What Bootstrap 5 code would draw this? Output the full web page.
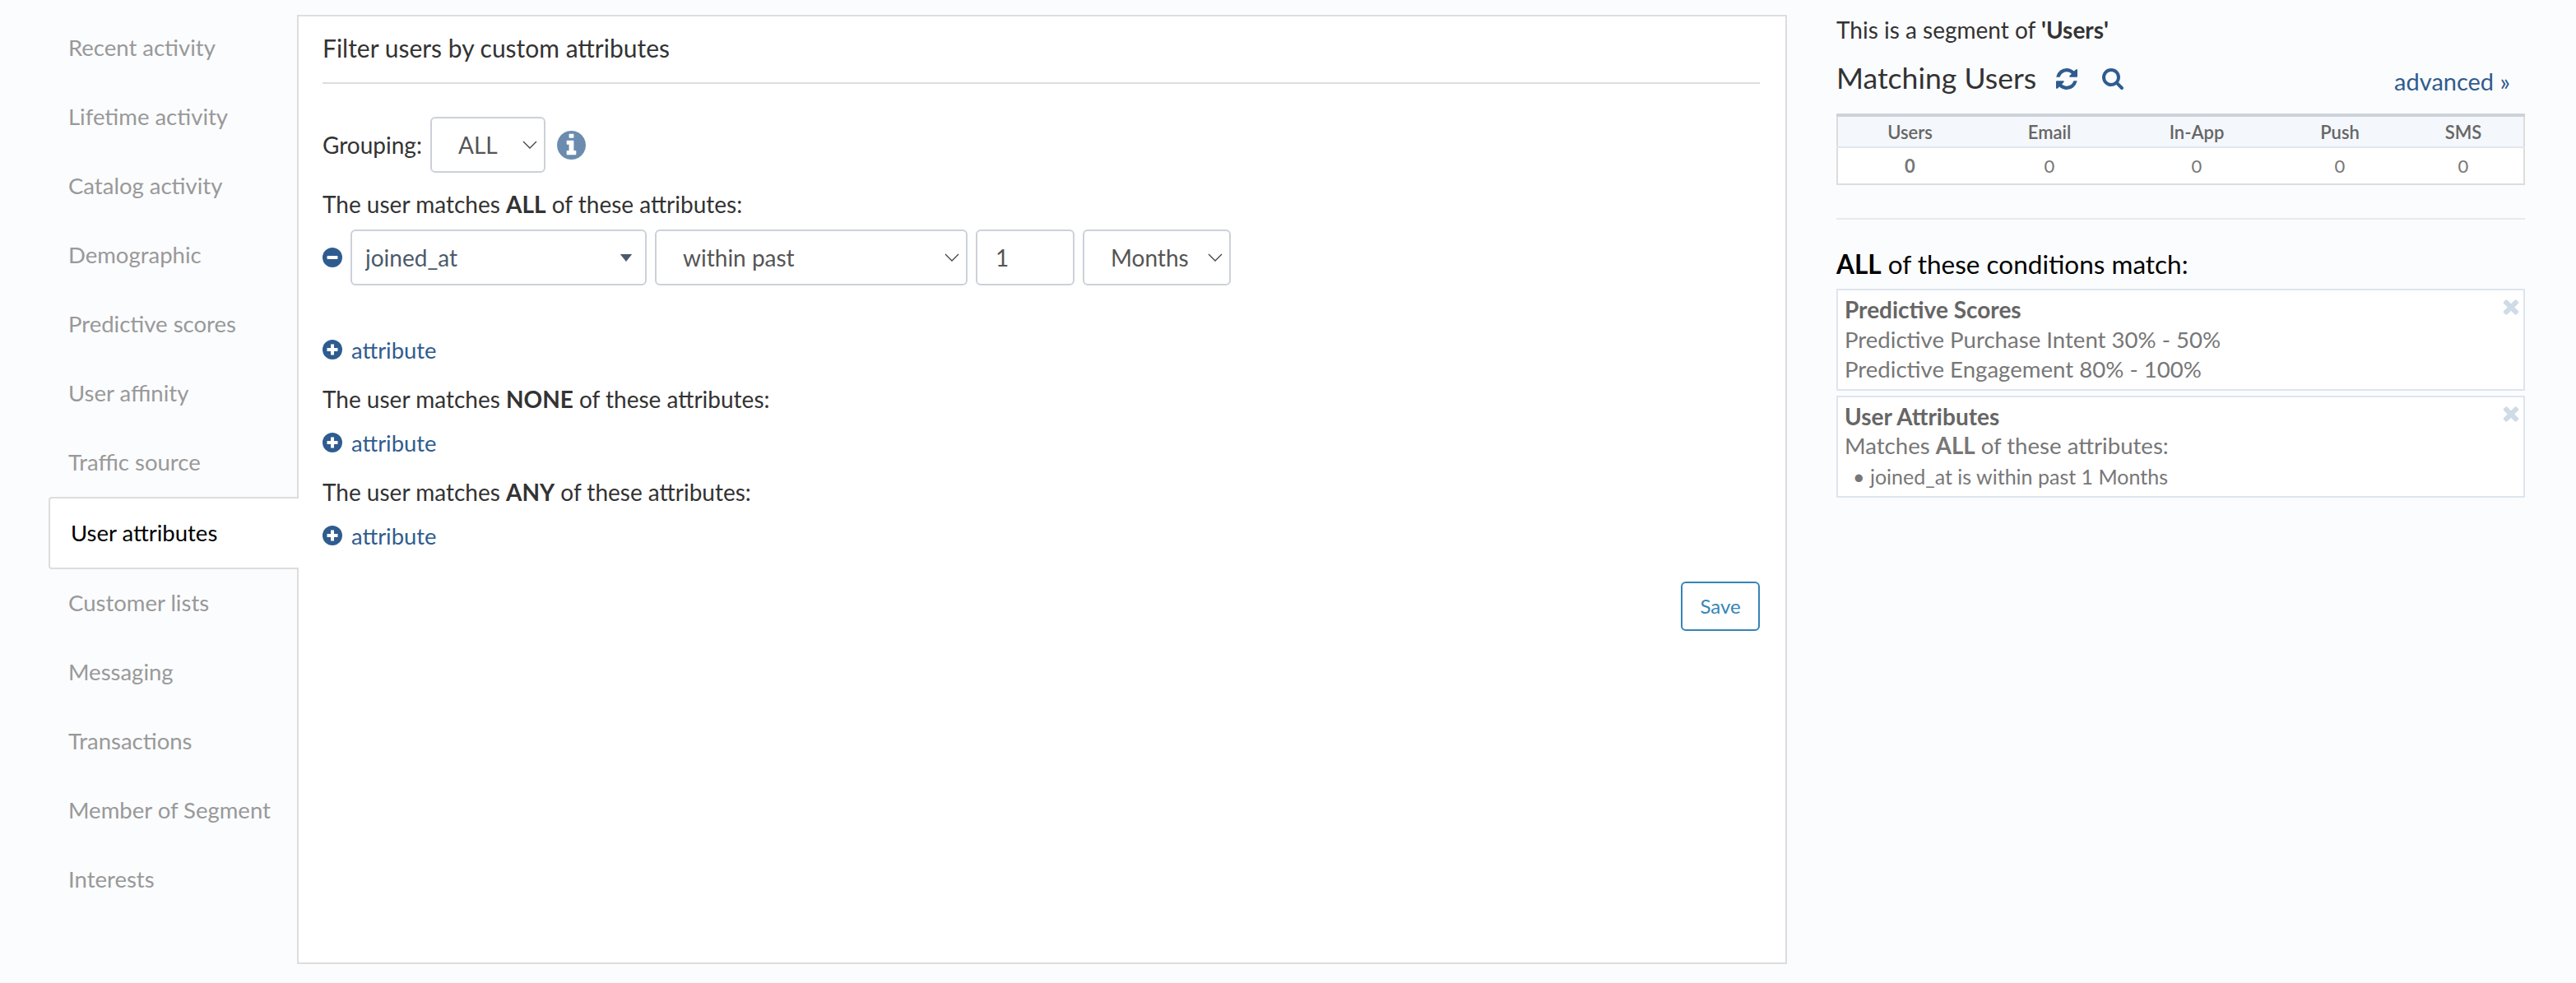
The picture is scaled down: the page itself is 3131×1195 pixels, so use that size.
<!DOCTYPE html>
<html lang="en"><head><meta charset="utf-8"><title>Segment</title>
<link href="https://cdn.jsdelivr.net/npm/bootstrap@5.3.0/dist/css/bootstrap.min.css" rel="stylesheet">
<style>
:root{--ink:#333;--blue:#2f5c8f}
html,body{height:100%}
body{background:#fbfcfe;font-family:Lato,"Liberation Sans",sans-serif;font-size:28px;color:var(--ink);overflow:hidden}
.shell{padding-top:18px;height:1195px}
.side-nav{width:361px;flex:none;margin-top:-2px;font-size:27.5px}
.side-link{display:flex;align-items:center;height:84px;padding-left:83px;color:#999;text-decoration:none}
.side-link.on{height:88px;margin:0 -2px -1px 59px;padding-left:25px;color:#000;background:#fff;border:2px solid #ddd;border-right:0;border-radius:4px 0 0 4px;position:relative;z-index:1}
.main-panel{width:1811px;height:1154px;flex:none;background:#fff;border:2px solid #ddd;border-radius:0;padding:0 31px 0 29px}
.panel-head{height:82px;border-bottom:2px solid #ddd;display:flex;align-items:center;padding-bottom:5px;color:#333;margin:0;font-size:30px;font-weight:400}
.group-row{margin-top:40px;height:68px;gap:10px}
.line-text{line-height:37px}
.pick{height:68px;font-size:28px;padding:0 40px 0 32px;color:#555;border:2px solid #ccd1d9;border-radius:6px;background-color:#fff;background-image:url("data:image/svg+xml,%3Csvg xmlns='http://www.w3.org/2000/svg' viewBox='0 0 18 10'%3E%3Cpath fill='none' stroke='%23444' stroke-width='1.3' d='M1 1l8 8 8-8'/%3E%3C/svg%3E");background-position:right 8px center;background-size:18px 10px;box-shadow:none}
.pick-sm{width:140px;padding-left:32px}
.pick-attr{width:360px;padding-left:16px;color:#4b5a6b;background-image:url("data:image/svg+xml,%3Csvg xmlns='http://www.w3.org/2000/svg' viewBox='0 0 16 10'%3E%3Cpath fill='%234b5a6b' d='M0 0h16L8 10z'/%3E%3C/svg%3E");background-size:16px 9px;background-position:right 15px center}
.pick-op{width:380px}
.pick-num{width:120px;height:68px;font-size:28px;padding:0 22px;color:#555;border:2px solid #ccd1d9;border-radius:6px}
.pick-unit{width:180px;padding-left:32px}
.ic-round{width:24px;height:24px;flex:none;fill:var(--blue)}
.ic-info{width:35px;height:35px;fill:#6b8cae;flex:none;margin-left:4px}
.row-attr{gap:10px}
.add-link{color:var(--blue);text-decoration:none;display:inline-flex;align-items:center;gap:11px;line-height:37px;font-size:27.4px}
.save-btn{width:96px;height:60px;padding:0;font-size:24px;color:#3585b5;border:2px solid #3585b5;border-radius:6px;background:#fff}
.right-col{width:837px;margin-left:60px;flex:none}
.top-note{line-height:37px;padding-top:0;margin:0}
.match-head{height:64px;margin-top:8px;padding-top:1px}
.match-title{font-size:35.6px;font-weight:400;margin:0;color:#333}
.ic-tool{width:26px;height:26px;fill:var(--blue)}
.adv-link{color:var(--blue);text-decoration:none;margin-right:18px;font-size:29px;margin-top:6px}
.stat-table{table-layout:fixed;width:837px;margin:11px 0 0;font-size:22px;border:2px solid #ddd;border-top:4px solid #cdd2da;background:#fff;--bs-table-bg:transparent;text-align:center}
.stat-table th{height:39px;padding:0;background:#f4f7fb;font-weight:600;color:#666;border-bottom:2px solid #e3e6ea;vertical-align:middle}
.stat-table td{height:45px;padding:0;color:#777;border:0;vertical-align:middle}
.rule{margin:40px 0 0;border:0;border-top:2px solid #e8eaee;opacity:1}
.cond-title{font-size:31.5px;color:#000;font-weight:400;margin:36px 0 11px;line-height:37px}
.cond-box{position:relative;background:#fff;border:2px solid #dde5ee;padding:5px 8px 5px;color:#777;margin-bottom:6px;line-height:36.6px;font-size:27.6px;border-radius:0}
.cond-name{font-weight:700;color:#666;font-size:28px}
.cond-sub{padding-left:10px;font-size:25px}
.cond-x{position:absolute;right:5px;top:10px;width:20px;height:20px;fill:#cfdbe6}
</style></head><body>
<div class="shell d-flex">
  <nav class="side-nav d-flex flex-column">
    <a class="side-link" href="#">Recent activity</a>
    <a class="side-link" href="#">Lifetime activity</a>
    <a class="side-link" href="#">Catalog activity</a>
    <a class="side-link" href="#">Demographic</a>
    <a class="side-link" href="#">Predictive scores</a>
    <a class="side-link" href="#">User affinity</a>
    <a class="side-link" href="#">Traffic source</a>
    <a class="side-link on" href="#">User attributes</a>
    <a class="side-link" href="#">Customer lists</a>
    <a class="side-link" href="#">Messaging</a>
    <a class="side-link" href="#">Transactions</a>
    <a class="side-link" href="#">Member of Segment</a>
    <a class="side-link" href="#">Interests</a>
  </nav>
  <main class="main-panel card d-block">
    <h2 class="panel-head">Filter users by custom attributes</h2>
    <div class="group-row d-flex align-items-center">
      <span>Grouping:</span>
      <select class="form-select pick pick-sm"><option>ALL</option></select>
      <svg class="ic-info" viewBox="128 128 1536 1536"><path d="M1152 1376v-160q0-14-9-23t-23-9h-96v-512q0-14-9-23t-23-9h-320q-14 0-23 9t-9 23v160q0 14 9 23t23 9h96v320h-96q-14 0-23 9t-9 23v160q0 14 9 23t23 9h448q14 0 23-9t9-23zm-128-896v-160q0-14-9-23t-23-9h-192q-14 0-23 9t-9 23v160q0 14 9 23t23 9h192q14 0 23-9t9-23zm640 416q0 209-103 385.5t-279.5 279.5-385.5 103-385.5-103-279.5-279.5-103-385.5 103-385.5 279.5-279.5 385.5-103 385.5 103 279.5 279.5 103 385.5z"/></svg>
    </div>
    <div class="line-text mt-3 pt-1">The user matches <b>ALL</b> of these attributes:</div>
    <div class="row-attr d-flex align-items-center mt-2 pt-1">
      <svg class="ic-round" viewBox="0 0 24 24"><circle cx="12" cy="12" r="12"/><rect x="5.5" y="10" width="13" height="4" rx="1" fill="#fff"/></svg>
      <select class="form-select pick pick-attr"><option>joined_at</option></select>
      <select class="form-select pick pick-op"><option>within past</option></select>
      <input class="form-control pick-num" value="1">
      <select class="form-select pick pick-unit"><option>Months</option></select>
    </div>
    <div style="margin-top:58px"><a class="add-link" href="#"><svg class="ic-round" viewBox="0 0 24 24"><circle cx="12" cy="12" r="12"/><path d="M10 5.5h4V10h4.5v4H14v4.5h-4V14H5.5v-4H10z" fill="#fff"/></svg>attribute</a></div>
    <div class="line-text" style="margin-top:20px">The user matches <b>NONE</b> of these attributes:</div>
    <div style="margin-top:14px"><a class="add-link" href="#"><svg class="ic-round" viewBox="0 0 24 24"><circle cx="12" cy="12" r="12"/><path d="M10 5.5h4V10h4.5v4H14v4.5h-4V14H5.5v-4H10z" fill="#fff"/></svg>attribute</a></div>
    <div class="line-text" style="margin-top:20px">The user matches <b>ANY</b> of these attributes:</div>
    <div style="margin-top:14px"><a class="add-link" href="#"><svg class="ic-round" viewBox="0 0 24 24"><circle cx="12" cy="12" r="12"/><path d="M10 5.5h4V10h4.5v4H14v4.5h-4V14H5.5v-4H10z" fill="#fff"/></svg>attribute</a></div>
    <div class="d-flex justify-content-end" style="margin-top:34px"><button class="btn save-btn" type="button">Save</button></div>
  </main>
  <aside class="right-col">
    <p class="top-note">This is a segment of <b>'Users'</b></p>
    <div class="match-head d-flex align-items-center">
      <h3 class="match-title">Matching Users</h3>
      <svg class="ic-tool" style="margin-left:24px" viewBox="128 128 1536 1536"><path d="M1639 1056q0 5-1 7-64 268-268 434.5t-478 166.5q-146 0-282.5-55t-243.5-157l-129 129q-19 19-45 19t-45-19-19-45v-448q0-26 19-45t45-19h448q26 0 45 19t19 45-19 45l-137 137q71 66 161 102t187 36q134 0 250-65t186-179q11-17 53-117 8-23 30-23h192q13 0 22.5 9.5t9.5 22.5zm25-800v448q0 26-19 45t-45 19h-448q-26 0-45-19t-19-45 19-45l138-138q-148-137-349-137-134 0-250 65t-186 179q-11 17-53 117-8 23-30 23h-199q-13 0-22.5-9.5t-9.5-22.5v-7q65-268 270-434.5t480-166.5q146 0 284 55.5t245 156.5l130-129q19-19 45-19t45 19 19 45z"/></svg>
      <svg class="ic-tool" style="margin-left:30px" viewBox="64 128 1664 1664"><path d="M1216 832q0-185-131.5-316.5t-316.5-131.5-316.5 131.5-131.5 316.5 131.5 316.5 316.5 131.5 316.5-131.5 131.5-316.5zm512 832q0 52-38 90t-90 38q-54 0-90-38l-343-342q-179 124-399 124-143 0-273.5-55.5t-225-150-150-225-55.5-273.5 55.5-273.5 150-225 225-150 273.5-55.5 273.5 55.5 225 150 150 225 55.5 273.5q0 220-124 399l343 343q37 37 37 90z"/></svg>
      <a class="adv-link ms-auto" href="#">advanced »</a>
    </div>
    <table class="table stat-table">
      <colgroup><col style="width:176px"><col style="width:164px"><col style="width:194px"><col style="width:154px"><col></colgroup>
      <thead><tr><th>Users</th><th>Email</th><th>In-App</th><th>Push</th><th>SMS</th></tr></thead>
      <tbody><tr><td class="fw-bold">0</td><td>0</td><td>0</td><td>0</td><td>0</td></tr></tbody>
    </table>
    <hr class="rule">
    <div class="cond-title"><b>ALL</b> of these conditions match:</div>
    <div class="cond-box">
      <svg class="cond-x" viewBox="288 288 1216 1280"><path d="M1490 1322q0 40-28 68l-136 136q-28 28-68 28t-68-28l-294-294-294 294q-28 28-68 28t-68-28l-136-136q-28-28-28-68t28-68l294-294-294-294q-28-28-28-68t28-68l136-136q28-28 68-28t68 28l294 294 294-294q28-28 68-28t68 28l136 136q28 28 28 68t-28 68l-294 294 294 294q28 28 28 68z"/></svg>
      <div class="cond-name">Predictive Scores</div>
      <div>Predictive Purchase Intent 30% - 50%</div>
      <div>Predictive Engagement 80% - 100%</div>
    </div>
    <div class="cond-box">
      <svg class="cond-x" viewBox="288 288 1216 1280"><path d="M1490 1322q0 40-28 68l-136 136q-28 28-68 28t-68-28l-294-294-294 294q-28 28-68 28t-68-28l-136-136q-28-28-28-68t28-68l294-294-294-294q-28-28-28-68t28-68l136-136q28-28 68-28t68 28l294 294 294-294q28-28 68-28t68 28l136 136q28 28 28 68t-28 68l-294 294 294 294q28 28 28 68z"/></svg>
      <div class="cond-name">User Attributes</div>
      <div>Matches <b>ALL</b> of these attributes:</div>
      <div class="cond-sub">• joined_at is within past 1 Months</div>
    </div>
  </aside>
</div>
<script src="https://cdn.jsdelivr.net/npm/bootstrap@5.3.0/dist/js/bootstrap.bundle.min.js"></script>
</body></html>
